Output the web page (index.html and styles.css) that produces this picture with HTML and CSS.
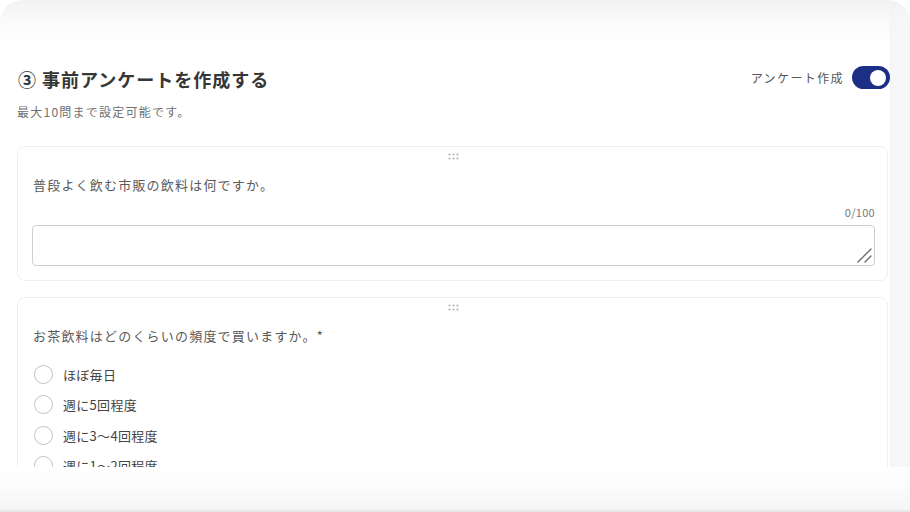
FILE: index.html
```html
<!DOCTYPE html>
<html lang="ja">
<head>
<meta charset="utf-8">
<link rel="stylesheet" href="styles.css">
</head>
<body>
<div class="frame">
  <div class="viewport">
    <main class="content">
      <header class="head">
        <h1 class="title">③ 事前アンケートを作成する</h1>
        <div class="switch-wrap">
          <span class="switch-label">アンケート作成</span>
          <span class="switch"><span class="knob"></span></span>
        </div>
      </header>
      <p class="sub">最大10問まで設定可能です。</p>

      <section class="card">
        <div class="handle">
          <svg width="11" height="7" viewBox="0 0 11 7"><g fill="#b5b5b5"><circle cx="1.5" cy="1.5" r="1.1"/><circle cx="5.5" cy="1.5" r="1.1"/><circle cx="9.5" cy="1.5" r="1.1"/><circle cx="1.5" cy="5.5" r="1.1"/><circle cx="5.5" cy="5.5" r="1.1"/><circle cx="9.5" cy="5.5" r="1.1"/></g></svg>
        </div>
        <p class="question">普段よく飲む市販の飲料は何ですか。</p>
        <div class="counter">0/100</div>
        <div class="answer-wrap">
          <textarea class="answer"></textarea>
          <svg class="grip" width="16" height="16" viewBox="0 0 16 16"><g stroke="#6a6a6a" stroke-width="1.4" stroke-linecap="round"><line x1="2" y1="15" x2="15" y2="2"/><line x1="9" y1="15" x2="15" y2="9"/></g></svg>
        </div>
      </section>

      <section class="card card-open">
        <div class="handle">
          <svg width="11" height="7" viewBox="0 0 11 7"><g fill="#b5b5b5"><circle cx="1.5" cy="1.5" r="1.1"/><circle cx="5.5" cy="1.5" r="1.1"/><circle cx="9.5" cy="1.5" r="1.1"/><circle cx="1.5" cy="5.5" r="1.1"/><circle cx="5.5" cy="5.5" r="1.1"/><circle cx="9.5" cy="5.5" r="1.1"/></g></svg>
        </div>
        <p class="question">お茶飲料はどのくらいの頻度で買いますか。*</p>
        <ul class="options">
          <li class="option"><span class="radio"></span>ほぼ毎日</li>
          <li class="option"><span class="radio"></span>週に5回程度</li>
          <li class="option"><span class="radio"></span>週に3〜4回程度</li>
          <li class="option"><span class="radio"></span>週に1〜2回程度</li>
        </ul>
      </section>
    </main>
    <div class="track"></div>
  </div>
  <div class="footer"></div>
  <div class="fade-top"></div>
</div>
</body>
</html>
```

FILE: styles.css
```css
* { box-sizing: border-box; }
html, body {
  margin: 0;
  padding: 0;
  background: #ffffff;
  font-family: "Noto Sans CJK JP", "Noto Sans", sans-serif;
}
.frame {
  position: relative;
  width: 910px;
  height: 512px;
  overflow: hidden;
  display: flex;
  flex-direction: column;
  background: #ffffff;
  border-radius: 22px 22px 0 0;
}
.viewport {
  height: 467px;
  flex: none;
  display: flex;
  overflow: hidden;
}
.content {
  width: 890px;
  flex: none;
  padding: 0 0 0 17px;
}
.track {
  flex: 1;
  background: #f7f7f7;
  border-left: 1px solid #f2f2f2;
}
.footer {
  flex: 1;
  background: linear-gradient(to bottom, #ffffff 0%, #fcfcfc 45%, #f5f5f5 100%);
  border-bottom: 2px solid #e8e8e8;
}
.head {
  display: flex;
  justify-content: space-between;
  align-items: center;
  padding-top: 65px;
  height: 90px;
}
.title {
  margin: 0 0 0 1px;
  font-size: 18px;
  line-height: 24px;
  font-weight: 700;
  letter-spacing: 1px;
  color: #363636;
  position: relative;
  top: 1px;
}
.switch-wrap {
  display: flex;
  align-items: center;
  gap: 8px;
}
.switch-label {
  font-size: 12px;
  line-height: 18px;
  letter-spacing: 1.4px;
  color: #555555;
}
.switch {
  width: 38px;
  height: 23px;
  border-radius: 12px;
  background: #1b2f85;
  display: flex;
  align-items: center;
  justify-content: flex-end;
  padding-right: 4px;
}
.knob {
  width: 16px;
  height: 16px;
  border-radius: 50%;
  background: #ffffff;
}
.sub {
  margin: 13px 0 0 0;
  font-size: 12px;
  line-height: 18px;
  letter-spacing: 1.25px;
  color: #707070;
}
.card {
  margin: 25px 2px 0 0;
  border: 1px solid #efefef;
  border-radius: 8px;
  padding: 4px 12px 14px 14px;
  background: #ffffff;
}
.card-open {
  margin-top: 16px;
}
.handle {
  height: 10px;
  display: flex;
  justify-content: center;
  align-items: center;
}
.question {
  margin: 15px 0 0 1px;
  font-size: 13px;
  line-height: 18px;
  letter-spacing: 1.2px;
  color: #5a5a5a;
}
.counter {
  margin-top: 11px;
  text-align: right;
  font-size: 11px;
  line-height: 14px;
  letter-spacing: 0.3px;
  color: #777777;
}
.answer-wrap {
  position: relative;
  margin-top: 6px;
}
.answer {
  display: block;
  width: 100%;
  height: 41px;
  border: 1px solid #cfcfcf;
  border-radius: 4px;
  background: #ffffff;
  resize: none;
  font-family: inherit;
}
.grip {
  position: absolute;
  right: 3px;
  bottom: 3px;
}
.options {
  list-style: none;
  margin: 20px 0 0 0;
  padding: 0 0 0 2px;
  display: flex;
  flex-direction: column;
  gap: 12.5px;
}
.option {
  display: flex;
  align-items: center;
  gap: 10px;
  height: 18px;
  font-size: 13px;
  letter-spacing: 0.3px;
  color: #444444;
}
.radio {
  width: 19px;
  height: 19px;
  border-radius: 50%;
  border: 1.5px solid #c2c2c2;
  background: #ffffff;
  flex: none;
}
.fade-top {
  position: absolute;
  left: 0;
  top: 0;
  width: 100%;
  height: 46px;
  background: linear-gradient(to bottom, rgba(242,242,242,0.95) 0%, rgba(246,246,246,0.6) 45%, rgba(255,255,255,0) 100%);
  border-radius: 22px 22px 0 0;
  pointer-events: none;
}
```
